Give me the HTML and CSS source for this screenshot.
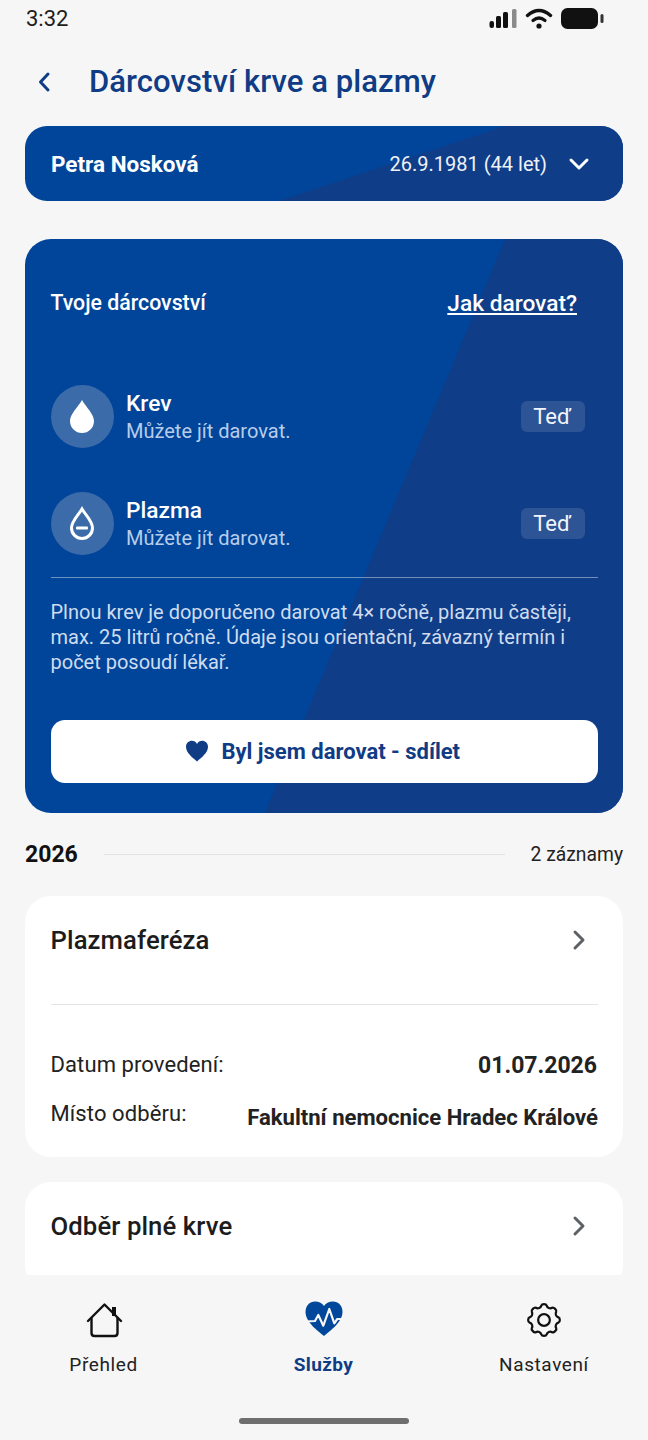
FILE: index.html
```html
<!DOCTYPE html>
<html lang="cs">
<head>
    <meta charset="UTF-8">
    <meta name="viewport" content="width=device-width, initial-scale=1.0">
    <title>Dárcovství krve a plazmy</title>
    <link rel="stylesheet" href="styles.css">
</head>
<body>
    <div class="screen">

        <div class="status-bar">
            <span class="status-time">3:32</span>
            <div class="status-icons">
                <svg width="28" height="21" viewBox="0 0 28 21">
                    <rect x="0.5" y="13" width="4.500" height="7" rx="2" fill="#111"/>
                    <rect x="7" y="8" width="5" height="12" rx="1.5" fill="#111"/>
                    <rect x="14" y="4" width="5" height="16" rx="1.5" fill="#111"/>
                    <rect x="23" y="1" width="4.500" height="19" rx="1.5" fill="#8a8a8a"/>
                </svg>
                <svg width="28" height="21" viewBox="0 0 28 21">
                    <path d="M2.500 7.500 Q14 -2.500 25.500 7.500" fill="none" stroke="#111" stroke-width="3.400" stroke-linecap="round"/>
                    <path d="M8 12.500 Q14 7.500 20 12.500" fill="none" stroke="#111" stroke-width="3.200" stroke-linecap="round"/>
                    <circle cx="14" cy="18" r="2.600" fill="#111"/>
                </svg>
                <svg width="43" height="21" viewBox="0 0 43 21">
                    <rect x="0" y="0" width="37" height="21" rx="6.500" fill="#111"/>
                    <rect x="39.500" y="6" width="3" height="9" rx="1.500" fill="#333"/>
                </svg>
            </div>
        </div>

        <header class="top-bar">
            <svg class="back" width="14" height="22" viewBox="0 0 14 22">
                <path d="M11 3 L3.5 11 L11 19" fill="none" stroke="#0f3c85" stroke-width="3" stroke-linecap="round" stroke-linejoin="round"/>
            </svg>
            <h1>Dárcovství krve a plazmy</h1>
        </header>

        <main class="content">
            <div class="person blue-card">
                <strong class="person-name">Petra Nosková</strong>
                <span class="person-birth">26.9.1981 (44 let)</span>
                <svg width="22" height="14" viewBox="0 0 22 14">
                    <path d="M3 3 L11 11 L19 3" fill="none" stroke="#fff" stroke-width="3" stroke-linecap="round" stroke-linejoin="round"/>
                </svg>
            </div>

            <section class="donation blue-card">
                <div class="donation-head">
                    <span class="donation-title">Tvoje dárcovství</span>
                    <a class="donation-link" href="#">Jak darovat?</a>
                </div>

                <div class="donor-row">
                    <div class="donor-icon">
                        <svg width="26" height="34" viewBox="0 0 26 34">
                            <path d="M13 1 C17 8 25 15 25 22 A12 12 0 0 1 1 22 C1 15 9 8 13 1 Z" fill="#fff"/>
                        </svg>
                    </div>
                    <div class="donor-text">
                        <strong>Krev</strong>
                        <span>Můžete jít darovat.</span>
                    </div>
                    <span class="badge">Teď</span>
                </div>

                <div class="donor-row">
                    <div class="donor-icon">
                        <svg width="26" height="34" viewBox="0 0 26 34">
                            <path d="M13 3 C16.500 9 23.500 15 23.500 22 A10.500 10.500 0 0 1 2.500 22 C2.500 15 9.500 9 13 3 Z" fill="none" stroke="#fff" stroke-width="3"/>
                            <rect x="7" y="20.500" width="12" height="3" rx="1" fill="#fff"/>
                        </svg>
                    </div>
                    <div class="donor-text">
                        <strong>Plazma</strong>
                        <span>Můžete jít darovat.</span>
                    </div>
                    <span class="badge">Teď</span>
                </div>

                <p class="donation-note">Plnou krev je doporučeno darovat 4× ročně, plazmu častěji, max. 25 litrů ročně. Údaje jsou orientační, závazný termín i počet posoudí lékař.</p>

                <button class="share-btn">
                    <svg width="24" height="22" viewBox="0 0 24 22">
                        <path d="M12 21.500 C8 18 1 13 1 6.800 C1 3 4 .8 6.800 .8 C9 .8 11 2 12 4 C13 2 15 .8 17.200 .8 C20 .8 23 3 23 6.800 C23 13 16 18 12 21.500 Z" fill="#0f3c85"/>
                    </svg>
                    Byl jsem darovat - sdílet
                </button>
            </section>

            <div class="year-row">
                <strong>2026</strong>
                <div class="year-line"></div>
                <span>2 záznamy</span>
            </div>

            <div class="record">
                <div class="record-head">
                    <span class="record-title">Plazmaferéza</span>
                    <svg width="16" height="22" viewBox="0 0 16 22">
                        <path d="M4 3 L12 11 L4 19" fill="none" stroke="#5c6166" stroke-width="3" stroke-linecap="round" stroke-linejoin="round"/>
                    </svg>
                </div>
                <div class="record-body">
                    <div class="record-line">
                        <span>Datum provedení:</span>
                        <strong class="record-date">01.07.2026</strong>
                    </div>
                    <div class="record-line">
                        <span>Místo odběru:</span>
                        <strong class="record-place">Fakultní nemocnice Hradec Králové</strong>
                    </div>
                </div>
            </div>

            <div class="record">
                <div class="record-head">
                    <span class="record-title">Odběr plné krve</span>
                    <svg width="16" height="22" viewBox="0 0 16 22">
                        <path d="M4 3 L12 11 L4 19" fill="none" stroke="#5c6166" stroke-width="3" stroke-linecap="round" stroke-linejoin="round"/>
                    </svg>
                </div>
            </div>
        </main>

        <nav class="tab-bar">
            <div class="tab">
                <svg width="38" height="38" viewBox="0 0 38 38">
                    <path d="M3 20 L19.500 3.500 L36 20" fill="none" stroke="#111" stroke-width="2.400" stroke-linecap="round" stroke-linejoin="round"/>
                    <path d="M6.500 17 V32 Q6.500 35 9.500 35 H29.500 Q32.500 35 32.500 32 V17" fill="none" stroke="#111" stroke-width="2.400"/>
                    <rect x="27" y="6" width="4" height="9" fill="#111"/>
                </svg>
                <span>Přehled</span>
            </div>
            <div class="tab tab-active">
                <svg width="38" height="38" viewBox="0 0 38 38">
                    <path d="M19 35 C13 30 .5 21 .5 11 C.5 4.500 5 .5 10 .5 C14 .5 17.500 2.500 19 5 C20.500 2.500 24 .5 28 .5 C33 .5 37.500 4.500 37.500 11 C37.500 21 25 30 19 35 Z" fill="#00469b"/>
                    <path d="M1 20.500 L10 20 L13.300 14 L18.300 24.700 L24.300 8 L29.300 22.300 L32.300 18 H38" fill="none" stroke="#f6f6f6" stroke-width="2.200" stroke-linejoin="round"/>
                </svg>
                <span>Služby</span>
            </div>
            <div class="tab">
                <svg width="38" height="38" viewBox="0 0 24 24">
                    <circle cx="12" cy="12" r="3.700" fill="none" stroke="#111" stroke-width="1.400"/>
                    <path d="M10.300 2.900 C10.700 1.700 13.300 1.700 13.700 2.900 C14.100 4.400 15.800 5.100 17.100 4.300 C18.200 3.700 20.300 5.800 19.700 6.900 C18.900 8.200 19.600 9.900 21.100 10.300 C22.300 10.700 22.300 13.300 21.100 13.700 C19.600 14.100 18.900 15.800 19.700 17.100 C20.300 18.200 18.200 20.300 17.100 19.700 C15.800 18.900 14.100 19.600 13.700 21.100 C13.300 22.300 10.700 22.300 10.300 21.100 C9.900 19.600 8.200 18.900 6.900 19.700 C5.800 20.300 3.700 18.200 4.300 17.100 C5.100 15.800 4.400 14.100 2.900 13.700 C1.700 13.300 1.700 10.700 2.900 10.300 C4.400 9.900 5.100 8.200 4.300 6.900 C3.700 5.800 5.800 3.700 6.900 4.300 C8.200 5.100 9.900 4.400 10.300 2.900 Z" fill="none" stroke="#111" stroke-width="1.400"/>
                </svg>
                <span>Nastavení</span>
            </div>
        </nav>

        <div class="home-bar"></div>
    </div>
</body>
</html>
```

FILE: styles.css
```css
body {
    margin: 0;
    padding: 0;
    background-color: #f6f6f6;
    color: #111;
    font-family: 'Roboto', sans-serif;
}
.screen {
    width: 648px;
    height: 1440px;
    display: flex;
    flex-direction: column;
    overflow: hidden;
}
.status-bar {
    height: 37px;
    flex-shrink: 0;
    display: flex;
    align-items: center;
    justify-content: space-between;
    padding: 0 44px 0 26px;
}
.status-time {
    font-size: 22px;
    color: #1c1c1c;
}
.status-icons {
    display: flex;
    align-items: center;
    gap: 8px;
}
.top-bar {
    height: 89px;
    flex-shrink: 0;
    display: flex;
    align-items: center;
    padding-left: 37px;
    gap: 38px;
}
h1 {
    margin: 0;
    font-size: 31px;
    font-weight: 500;
    letter-spacing: .08px;
    color: #0f3c85;
}
.content {
    flex: 1;
    min-height: 0;
    overflow: hidden;
    padding: 0 25px;
}
.blue-card {
    position: relative;
    background-color: #00459a;
    color: #fff;
    overflow: hidden;
}
.blue-card::before {
    content: "";
    position: absolute;
    top: 0;
    right: 0;
    bottom: 0;
    left: 0;
    background-color: #103d87;
}
.blue-card > * {
    position: relative;
}
.person {
    height: 75px;
    display: flex;
    align-items: center;
    padding: 0 33px 0 26px;
    border-radius: 22px;
    margin-bottom: 38px;
}
.person::before {
    clip-path: polygon(80.300% 0, 100% 0, 100% 100%, 42.500% 100%);
}
.person-name {
    font-size: 22.500px;
    font-weight: 700;
    flex: 1;
}
.person-birth {
    font-size: 20px;
    color: #eef2f8;
    margin-right: 21px;
}
.donation {
    height: 574px;
    box-sizing: border-box;
    padding: 0 25px 0 25.500px;
    border-radius: 26px;
}
.donation::before {
    clip-path: polygon(80.300% 0, 100% 0, 100% 100%, 40.100% 100%);
}
.donation-head {
    height: 127.500px;
    display: flex;
    justify-content: space-between;
    padding: 51px 21px 0 0;
    box-sizing: border-box;
}
.donation-title {
    font-size: 21.300px;
    font-weight: 500;
}
.donation-link {
    color: #fff;
    font-size: 22.700px;
    font-weight: 500;
}
.donor-row {
    height: 63px;
    display: flex;
    align-items: center;
    margin: 18px 0 44px;
    padding-right: 13px;
}
.donor-row:nth-of-type(3) {
    margin: 0 0 22px;
}
.donor-icon {
    width: 63px;
    height: 63px;
    border-radius: 50%;
    background-color: #3b6ba9;
    display: flex;
    align-items: center;
    justify-content: center;
    margin-right: 12.500px;
}
.donor-text {
    flex: 1;
    display: flex;
    flex-direction: column;
    gap: 2px;
}
.donor-text strong {
    font-size: 22.700px;
    font-weight: 500;
}
.donor-text span {
    font-size: 20px;
    color: #b8cdea;
}
.badge {
    background-color: rgba(255, 255, 255, .12);
    color: #f2f5fa;
    border-radius: 6px;
    padding: 3px 14px 3px 12px;
    font-size: 22px;
}
.donation-note {
    margin: 0;
    border-top: 1px solid rgba(255, 255, 255, .42);
    padding-top: 22px;
    font-size: 20px;
    line-height: 25px;
    color: #cfdcef;
}
.share-btn {
    display: flex;
    align-items: center;
    justify-content: center;
    gap: 12px;
    width: 100%;
    height: 63px;
    margin-top: 45px;
    padding: 0 3px 0 0;
    background-color: #fff;
    border: none;
    border-radius: 14px;
    color: #0f3c85;
    font-family: 'Roboto', sans-serif;
    font-size: 22px;
    font-weight: 700;
}
.year-row {
    height: 83px;
    display: flex;
    align-items: center;
    gap: 26px;
}
.year-row strong {
    font-size: 23px;
    font-weight: 700;
}
.year-row span {
    font-size: 19.300px;
    color: #222;
}
.year-line {
    flex: 1;
    height: 1px;
    background-color: #e2e2e2;
}
.record {
    background-color: #fff;
    border-radius: 26px;
    padding: 0 25px 0 25.500px;
    margin-bottom: 25px;
}
.record-head {
    height: 109px;
    display: flex;
    align-items: flex-start;
    justify-content: space-between;
    padding: 29px 11px 0 0;
    box-sizing: border-box;
    border-bottom: 1px solid #e4e4e4;
}
.record-head svg {
    margin-top: 4px;
}
.record:last-child .record-head {
    border-bottom: none;
}
.record-title {
    font-size: 25.700px;
    font-weight: 500;
    letter-spacing: .1px;
    color: #1c1c1c;
}
.record-body {
    padding: 47px 0 27px;
    display: flex;
    flex-direction: column;
    gap: 22px;
}
.record-line {
    display: flex;
    align-items: flex-start;
    justify-content: space-between;
    font-size: 22px;
    letter-spacing: .1px;
    color: #222;
}
.record-line strong {
    font-weight: 700;
    letter-spacing: 0;
}
.record-date {
    font-size: 23px;
    margin-right: 1px;
}
.record-place {
    font-size: 22.100px;
    margin-top: 3px;
}
.tab-bar {
    height: 143px;
    flex-shrink: 0;
    display: grid;
    grid-template-columns: 207px 233px 208px;
    padding-top: 26px;
    box-sizing: border-box;
    background-color: #f6f6f6;
}
.tab {
    display: flex;
    flex-direction: column;
    align-items: center;
    gap: 14px;
    font-size: 19px;
    font-weight: 400;
    letter-spacing: .6px;
    color: #222;
}
.tab-active {
    color: #0f3c85;
    font-weight: 700;
    letter-spacing: .4px;
}
.home-bar {
    width: 170px;
    height: 6px;
    flex-shrink: 0;
    border-radius: 3px;
    background-color: #6e6e6e;
    margin: 0 auto 16px;
}
```
